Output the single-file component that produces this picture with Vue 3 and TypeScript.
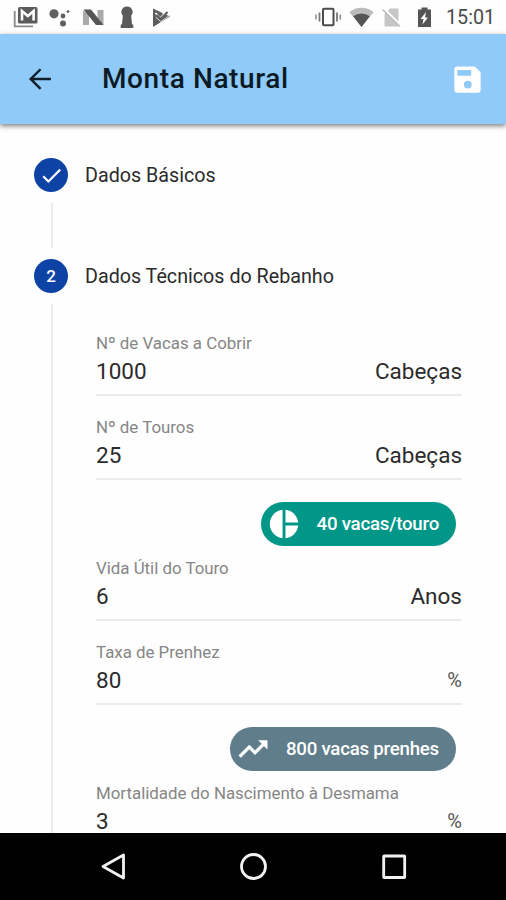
<script setup lang="ts">
interface Field {
  label: string
  value: string
  unit: string
  chip?: { text: string; icon: 'pie' | 'trend' }
}

const fields: Field[] = [
  { label: 'Nº de Vacas a Cobrir', value: '1000', unit: 'Cabeças' },
  { label: 'Nº de Touros', value: '25', unit: 'Cabeças', chip: { text: '40 vacas/touro', icon: 'pie' } },
  { label: 'Vida Útil do Touro', value: '6', unit: 'Anos' },
  { label: 'Taxa de Prenhez', value: '80', unit: '%', chip: { text: '800 vacas prenhes', icon: 'trend' } },
  { label: 'Mortalidade do Nascimento à Desmama', value: '3', unit: '%' },
]
</script>

<template>
  <div class="screen">
    <div class="status">
      <svg class="status-icons" width="180" height="34" viewBox="0 0 180 34">
        <path d="M14.700 11v15.300H33" fill="none" stroke="#888" stroke-width="1.800" />
        <rect x="18" y="7" width="19.500" height="16.500" rx="1.500" fill="#5b5b5b" />
        <path d="M22 20.500V11l5.800 5 5.800-5v9.500" fill="none" stroke="#fff" stroke-width="2.600" />
        <g fill="#5f5f5f">
          <circle cx="54" cy="13.800" r="4.600" />
          <circle cx="63" cy="16" r="2.400" />
          <circle cx="68" cy="11.600" r="1.400" />
          <circle cx="63" cy="23.500" r="3" />
        </g>
        <path d="M83 10.500l6 4v10.500h-6zM97.500 10h6v15l-6-4z" fill="#aaa" />
        <path d="M83.500 9.500h7.500l12.500 15.500h-7.500z" fill="#565656" />
        <path d="M127 6.500a5.600 5.600 0 0 1 4.200 9.300l.8 8.200 1.300 1v3h-12.600v-3l1.300-1 .8-8.200A5.600 5.600 0 0 1 127 6.500z" fill="#5b5b5b" />
        <path d="M153 8.500l17 8-17 10.500z" fill="#5f5f5f" />
        <path d="M155.500 13l4.700 5 8-8" fill="none" stroke="#fff" stroke-width="1.700" />
        <path d="M159.500 8l6 0 2 3-4 4z" fill="#fff" />
        <path d="M156.500 15l4.200 4 6.800-7" fill="none" stroke="#5f5f5f" stroke-width="2.200" />
        <path d="M155.800 17.200l5 4.500 9-6.500" fill="none" stroke="#ddd" stroke-width="1" />
      </svg>
      <div class="status-right">
        <svg width="125" height="34" viewBox="312 0 125 34">
          <rect x="323" y="8.800" width="10.500" height="16.500" rx="1" fill="none" stroke="#4c4c4c" stroke-width="2" />
          <path d="M319.500 12.500v9M337 12.500v9" stroke="#777" stroke-width="1.800" />
          <path d="M316 14.500v5M340.300 14.500v5" stroke="#888" stroke-width="1.500" />
          <path d="M349.500 12.200a18.500 18.500 0 0 1 24 0L361.500 27z" fill="#bbb" />
          <path d="M353.200 16.200a14 14 0 0 1 16.600 0L361.500 27z" fill="#555" />
          <path d="M390 8.500h8.500v18H384.500V14z" fill="#c6c6c6" />
          <path d="M383.500 8.500l18 18" stroke="#fff" stroke-width="2.600" />
          <path d="M382.500 9.500l17.500 17" stroke="#bbb" stroke-width="1.500" />
          <path d="M421.500 7.500h6v2h3.500v17.500h-13v-17.500h3.500z" fill="#555" />
          <path d="M426 12l-5.500 7h3l-1 5.500 5.500-7h-3z" fill="#fff" />
        </svg>
        <span class="clock">15:01</span>
      </div>
    </div>

    <header class="appbar">
      <svg class="back" width="34" height="34" viewBox="0 0 24 24">
        <path d="M19.700 11.200H7.600l5.400-5.500-1.200-1.200L4.200 12l7.600 7.500 1.200-1.200-5.400-5.500h12.100z" fill="#10202c" />
      </svg>
      <h1>Monta Natural</h1>
      <svg class="save" width="35" height="35" viewBox="0 0 24 24">
        <path fill="#fff" fill-rule="evenodd" d="M17 3H5a2 2 0 0 0-2 2v14a2 2 0 0 0 2 2h14a2 2 0 0 0 2-2V7zM14.500 9.500H5v-4h9.500zM12.200 12.800a2.700 2.700 0 1 1 0 5.400 2.700 2.700 0 0 1 0-5.400z" />
      </svg>
    </header>

    <main>
      <section class="step">
        <div class="rail">
          <span class="dot">
            <svg width="25" height="25" viewBox="0 0 24 24"><path d="M9 16.200L4.800 12l-1.500 1.500L9 19.200 21.100 7.100l-1.500-1.500z" fill="#fff" /></svg>
          </span>
          <span class="line line-short"></span>
        </div>
        <h2>Dados Básicos</h2>
      </section>
      <section class="step step-open">
        <div class="rail">
          <span class="dot">2</span>
          <span class="line line-long"></span>
        </div>
        <div class="content">
          <h2>Dados Técnicos do Rebanho</h2>
          <div class="form">
            <template v-for="field in fields" :key="field.label">
              <div class="field">
                <div class="label">{{ field.label }}</div>
                <div class="entry">
                  <span class="value">{{ field.value }}</span>
                  <span :class="field.unit === '%' ? 'unit percent' : 'unit'">{{ field.unit }}</span>
                </div>
              </div>
              <div v-if="field.chip" :class="['chip', field.chip.icon]">
                <svg v-if="field.chip.icon === 'pie'" width="34" height="34" viewBox="0 0 24 24">
                  <path d="M11 2v20c-5.070-.5-9-4.790-9-10s3.930-9.500 9-10zm2.030 0v8.990H22c-.47-4.740-4.240-8.520-8.970-8.990zm0 11.010V22c4.740-.47 8.500-4.250 8.970-8.990z" fill="#fff" />
                </svg>
                <svg v-else width="34" height="34" viewBox="0 0 24 24">
                  <path d="M16 6l2.290 2.290-4.880 4.880-4-4L2 16.590 3.410 18l6-6 4 4 6.300-6.290L22 12V6z" fill="#fff" stroke="#fff" stroke-width="0.400" />
                </svg>
                <span>{{ field.chip.text }}</span>
              </div>
            </template>
          </div>
        </div>
      </section>
    </main>

    <nav>
      <svg width="506" height="67" viewBox="0 0 506 67" fill="none" stroke="#f2f2f2" stroke-width="2.800">
        <path d="M123.500 22v23L103 33.500z" stroke-linejoin="round" />
        <circle cx="253.500" cy="33.500" r="12" />
        <rect x="383.700" y="23" width="21" height="21.500" rx="0.500" />
      </svg>
    </nav>
  </div>
</template>

<style>
body {
  margin: 0;
  background: #fff;
}
</style>

<style scoped>
.screen {
  display: flex;
  flex-direction: column;
  width: 506px;
  height: 900px;
  overflow: hidden;
  background: #fefefe;
  font-family: Roboto, "Liberation Sans", sans-serif;
  color: #2b2b2b;
}
.status {
  display: flex;
  justify-content: space-between;
  flex: none;
  height: 34px;
}
.status-right {
  display: flex;
  align-items: center;
}
.clock {
  width: 60px;
  padding: 2px 0 0 9px;
  font-size: 19.700px;
  line-height: 24px;
  color: #4a4a4a;
}
.appbar {
  display: flex;
  align-items: center;
  flex: none;
  height: 90px;
  box-sizing: border-box;
  padding: 0 21px 0 23px;
  background: #90caf9;
  box-shadow: 0 2px 5px rgba(0, 0, 0, 0.5);
  z-index: 1;
}
h1 {
  flex: 1;
  margin: 0 0 0 45px;
  font-size: 28px;
  font-weight: 500;
  line-height: 34px;
  letter-spacing: 0.600px;
  color: #0c1a25;
}
main {
  flex: 1;
  min-height: 0;
  overflow: hidden;
  padding: 34px 44px 0 34px;
}
.step {
  display: flex;
  gap: 17px;
  height: 101px;
}
.step-open {
  height: 600px;
}
.rail {
  display: flex;
  flex-direction: column;
  align-items: center;
  width: 34px;
}
.dot {
  display: flex;
  align-items: center;
  justify-content: center;
  flex: none;
  width: 34px;
  height: 34px;
  border-radius: 50%;
  background: #0d43a5;
  color: #fff;
  font-size: 17px;
  font-weight: 500;
}
.line {
  width: 2px;
  margin: 11px 0 0 2px;
  background: #ebebeb;
}
.line-short {
  height: 45px;
}
.line-long {
  flex: 1;
}
.content {
  flex: 1;
}
h2 {
  margin: 0;
  padding-top: 1px;
  font-size: 19.700px;
  font-weight: 400;
  line-height: 34px;
}
.form {
  display: flex;
  flex-direction: column;
  padding: 17px 0 0 11px;
}
.field {
  height: 63px;
  margin-top: 21.400px;
  box-sizing: border-box;
  border-bottom: 2px solid #ebebeb;
}
.field:first-child {
  margin-top: 22px;
}
.chip + .field {
  margin-top: 12px;
}
.label {
  padding-top: 1px;
  font-size: 16.900px;
  line-height: 19px;
  letter-spacing: -0.020px;
  color: #868686;
}
.entry {
  display: flex;
  justify-content: space-between;
  margin-top: 7px;
  font-size: 22.500px;
  line-height: 22px;
}
.percent {
  padding-top: 1px;
  font-size: 20px;
  line-height: 21px;
  color: #555;
}
.chip {
  display: flex;
  align-items: center;
  align-self: flex-end;
  height: 44px;
  margin: 21.600px 6px 0 0;
  padding: 0 17px 0 6px;
  gap: 16px;
  border-radius: 22px;
  color: #fff;
  font-size: 18.700px;
  font-weight: 500;
  letter-spacing: -0.240px;
}
.pie {
  background: #009688;
}
.trend {
  background: #607d8b;
}
nav {
  display: flex;
  flex: none;
  height: 67px;
  background: #000;
}
</style>
